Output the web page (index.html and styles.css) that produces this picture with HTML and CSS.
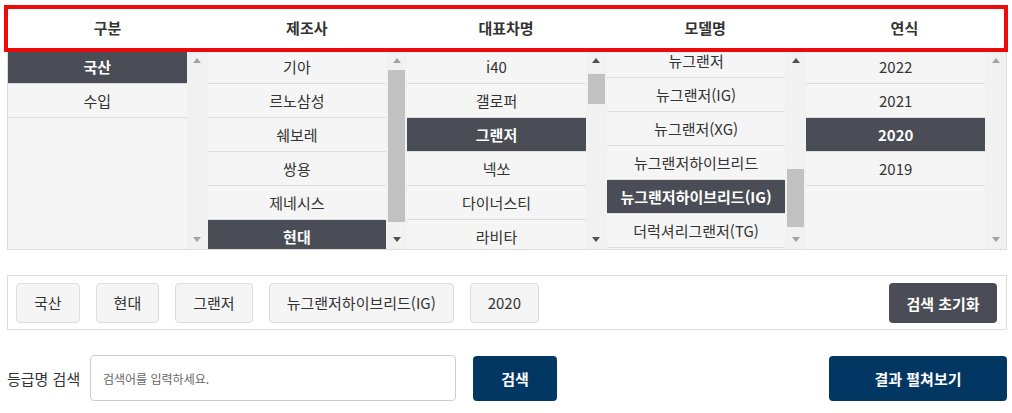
FILE: index.html
```html
<!DOCTYPE html>
<html lang="ko">
<head>
<meta charset="utf-8">
<title>차량 검색</title>
<link rel="stylesheet" href="styles.css">
</head>
<body>
<div class="page">
  <div class="head">
    <div class="head-cell">구분</div>
    <div class="head-cell">제조사</div>
    <div class="head-cell">대표차명</div>
    <div class="head-cell">모델명</div>
    <div class="head-cell">연식</div>
  </div>

  <div class="lists">
    <div class="col">
      <div class="viewport">
        <ul class="items">
          <li class="on">국산</li>
          <li>수입</li>
        </ul>
      </div>
      <div class="sbar">
        <span class="arr up"></span>
        <div class="track"></div>
        <span class="arr down"></span>
      </div>
    </div>

    <div class="col">
      <div class="viewport">
        <ul class="items">
          <li>기아</li>
          <li>르노삼성</li>
          <li>쉐보레</li>
          <li>쌍용</li>
          <li>제네시스</li>
          <li class="on">현대</li>
        </ul>
      </div>
      <div class="sbar">
        <span class="arr up"></span>
        <div class="track"><div class="thumb thumb-maker"></div></div>
        <span class="arr down act"></span>
      </div>
    </div>

    <div class="col">
      <div class="viewport">
        <ul class="items">
          <li>i40</li>
          <li>갤로퍼</li>
          <li class="on">그랜저</li>
          <li>넥쏘</li>
          <li>다이너스티</li>
          <li>라비타</li>
        </ul>
      </div>
      <div class="sbar">
        <span class="arr up act"></span>
        <div class="track"><div class="thumb thumb-car"></div></div>
        <span class="arr down act"></span>
      </div>
    </div>

    <div class="col">
      <div class="viewport">
        <ul class="items scrolled">
          <li>뉴그랜저</li>
          <li>뉴그랜저(IG)</li>
          <li>뉴그랜저(XG)</li>
          <li>뉴그랜저하이브리드</li>
          <li class="on">뉴그랜저하이브리드(IG)</li>
          <li>더럭셔리그랜저(TG)</li>
        </ul>
      </div>
      <div class="sbar">
        <span class="arr up act"></span>
        <div class="track"><div class="thumb thumb-model"></div></div>
        <span class="arr down"></span>
      </div>
    </div>

    <div class="col">
      <div class="viewport">
        <ul class="items">
          <li>2022</li>
          <li>2021</li>
          <li class="on">2020</li>
          <li>2019</li>
        </ul>
      </div>
      <div class="sbar">
        <span class="arr up"></span>
        <div class="track"></div>
        <span class="arr down"></span>
      </div>
    </div>
  </div>

  <div class="chips">
    <button class="chip" type="button">국산</button>
    <button class="chip" type="button">현대</button>
    <button class="chip" type="button">그랜저</button>
    <button class="chip" type="button">뉴그랜저하이브리드(IG)</button>
    <button class="chip" type="button">2020</button>
    <button class="reset" type="button">검색 초기화</button>
  </div>

  <div class="search">
    <label class="search-label" for="q">등급명 검색</label>
    <input class="search-input" id="q" type="text" placeholder="검색어를 입력하세요.">
    <button class="btn-navy btn-search" type="button">검색</button>
    <button class="btn-navy btn-expand" type="button">결과 펼쳐보기</button>
  </div>
</div>
</body>
</html>
```

FILE: styles.css
```css
* {
  box-sizing: border-box;
}

html, body {
  margin: 0;
  padding: 0;
  background: #ffffff;
}

body {
  font-family: "Noto Sans CJK KR", "Noto Sans", sans-serif;
  font-size: 15px;
  color: #333333;
}

.page {
  width: 1000px;
  margin-left: 7px;
  padding-top: 5px;
}

/* header row (red highlighted) */
.head {
  position: relative;
  z-index: 1;
  margin: 0 -1px 0 -3px;
  height: 47px;
  border: 4px solid #ec0a0a;
  background: #ffffff;
  display: grid;
  grid-template-columns: repeat(5, 1fr);
  align-items: center;
}

.head-cell {
  text-align: center;
  font-weight: 700;
  font-size: 15px;
  line-height: 20px;
  color: #333333;
  padding-bottom: 1px;
}

/* list columns */
.lists {
  margin-top: -3px;
  height: 201px;
  border: 1px solid #dddddd;
  display: grid;
  grid-template-columns: repeat(5, 1fr);
  background: #f5f5f5;
}

.col {
  display: flex;
  min-width: 0;
  height: 199px;
}

.viewport {
  flex: 1;
  overflow: hidden;
  background: #f5f5f5;
}

.items {
  list-style: none;
  margin: 0;
  padding: 0;
}

.items.scrolled {
  margin-top: -6px;
}

.items li {
  height: 34px;
  border-bottom: 1px solid #dddddd;
  display: flex;
  align-items: center;
  justify-content: center;
  font-size: 15px;
  line-height: 20px;
  color: #333333;
  white-space: nowrap;
}

.items li.on {
  background: #4a4d55;
  color: #ffffff;
  font-weight: 700;
}

/* fake classic scrollbar */
.sbar {
  width: 21px;
  flex: none;
  background: #f1f1f1;
  display: flex;
  flex-direction: column;
}

.arr {
  height: 20px;
  flex: none;
  display: flex;
  align-items: center;
  justify-content: center;
}

.arr::before {
  content: "";
  width: 0;
  height: 0;
  border-left: 4.5px solid transparent;
  border-right: 4.5px solid transparent;
}

.arr.up::before {
  border-bottom: 5px solid #a3a3a3;
}

.arr.down::before {
  border-top: 5px solid #a3a3a3;
}

.arr.up.act::before {
  border-bottom-color: #505050;
}

.arr.down.act::before {
  border-top-color: #505050;
}

.track {
  flex: 1;
}

.thumb {
  margin: 0 2px;
  background: #c1c1c1;
}

.thumb-maker {
  height: 152px;
}

.thumb-car {
  margin-top: 4px;
  height: 30px;
}

.thumb-model {
  margin-top: 99px;
  height: 58px;
}

/* selected chips */
.chips {
  margin-top: 25px;
  height: 55px;
  border: 1px solid #dddddd;
  padding: 7px 9px 6px 8px;
  display: flex;
  align-items: flex-start;
  gap: 16px;
}

.chip {
  height: 40px;
  padding: 0 17px;
  border: 1px solid #dddddd;
  border-radius: 4px;
  background: #f5f5f5;
  font-family: "Noto Sans CJK KR", "Noto Sans", sans-serif;
  font-size: 15px;
  color: #333333;
  line-height: 20px;
}

.reset {
  margin-left: auto;
  width: 108px;
  height: 40px;
  border: 0;
  border-radius: 4px;
  background: #4a4d55;
  color: #ffffff;
  font-family: "Noto Sans CJK KR", "Noto Sans", sans-serif;
  font-size: 15px;
  font-weight: 700;
}

/* search row */
.search {
  margin-top: 25px;
  display: flex;
  align-items: center;
}

.search-label {
  font-size: 15px;
  color: #333333;
  width: 83px;
}

.search-input {
  width: 366px;
  height: 46px;
  border: 1px solid #cccccc;
  border-radius: 4px;
  padding: 0 12px;
  font-family: "Noto Sans CJK KR", "Noto Sans", sans-serif;
  font-size: 12px;
  color: #333333;
  outline: none;
}

.search-input::placeholder {
  color: #666666;
}

.btn-navy {
  height: 45px;
  border: 0;
  border-radius: 4px;
  background: #023764;
  color: #ffffff;
  font-family: "Noto Sans CJK KR", "Noto Sans", sans-serif;
  font-size: 15px;
  font-weight: 700;
}

.btn-search {
  width: 84px;
  margin-left: 17px;
}

.btn-expand {
  width: 178px;
  margin-left: auto;
}
```
